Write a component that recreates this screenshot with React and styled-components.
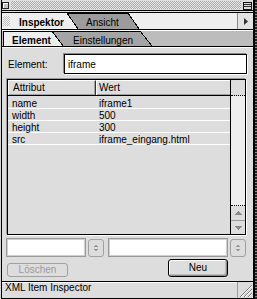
import React from "react";
import styled, { createGlobalStyle } from "styled-components";

const GlobalStyle = createGlobalStyle`
  html, body { margin: 0; padding: 0; }
  body {
    width: 257px;
    height: 299px;
    overflow: hidden;
    background: #d4d4d4;
    font-family: "Liberation Sans", Arial, sans-serif;
    font-size: 10px;
    color: #000;
  }
  * { box-sizing: border-box; }
`;

const Screen = styled.div`
  display: flex;
  width: 257px;
  height: 299px;
  padding-left: 1px;
  background: #d4d4d4;
`;

const Window = styled.div`
  width: 254px;
  height: 299px;
  display: flex;
  flex-direction: column;
  border-left: 1px solid #000;
  border-right: 2px solid #000;
  border-bottom: 1px solid #000;
  background: #dddddd;
`;

const BackStrip = styled.div`
  width: 2px;
  height: 299px;
  background: repeating-linear-gradient(to bottom, #222 0 2px, #8a8a8a 2px 3px);
`;

/* ---------- title bar ---------- */
const TitleBar = styled.div`
  display: flex;
  align-items: flex-start;
  gap: 2px;
  height: 11px;
  padding: 1px 0 0 0;
  border-bottom: 1px solid #000;
  background: #dddddd;
`;

const CloseBox = styled.div`
  width: 7px;
  height: 7px;
  margin-top: 1px;
  border: 1px solid #222;
  background: #c4c4c4;
  box-shadow: inset 1px 1px 0 #fff;
`;

const Checker = styled.div`
  background: conic-gradient(${p => p.$a} 25%, ${p => p.$b} 0 50%, ${p => p.$a} 0 75%, ${p => p.$b} 0) 0 0 / 2px 2px;
`;

const TitleStripes = styled(Checker)`
  flex: 1;
  height: 8px;
`;

const CollapseBox = styled.svg`
  display: block;
  margin-top: 1px;
  margin-right: 1px;
`;

/* ---------- tabs ---------- */
const TabRow = styled.div`
  display: flex;
  height: ${p => p.$h}px;
  margin-top: ${p => p.$mt || 0}px;
  border-top: 1px solid ${p => p.$topColor};
  border-bottom: 1px solid #000;
  background: ${p => p.$bg};
`;

const Tab = styled.div`
  display: flex;
  align-items: flex-start;
  flex: none;
  height: 100%;
  width: ${p => p.$w}px;
  padding-left: ${p => p.$pl}px;
  margin-left: ${p => p.$ml || 0}px;
  background: ${p => p.$bg};
  border-top: ${p => (p.$topLine ? "1px solid #000" : "none")};
  border-left: ${p => (p.$leftLine ? "1px solid #000" : "none")};
`;

const TabLabel = styled.span`
  font-weight: ${p => (p.$bold ? 700 : 400)};
  font-size: 10px;
  line-height: 11px;
  padding-top: ${p => p.$pt}px;
  white-space: nowrap;
`;

const Gripper = styled(Checker)`
  width: 7px;
  height: 10px;
  margin-top: 3px;
  margin-right: 9px;
`;

const Filler = styled.div`
  flex: 1;
`;

const ArrowButton = styled.div`
  flex: none;
  width: 16px;
  height: 100%;
  display: flex;
  align-items: center;
  justify-content: center;
  border-left: 1px solid #888;
  background: #e2e2e2;
`;

const SlantSvg = styled.svg`
  display: block;
  flex: none;
`;

const Slant = ({ w, h, left, right, topLine }) => (
  <SlantSvg width={w} height={h} viewBox={`0 0 ${w} ${h}`} shapeRendering="crispEdges">
    <polygon points={`0,0 ${w},${h} 0,${h}`} fill={left} />
    <polygon points={`0,0 ${w},0 ${w},${h}`} fill={right} />
    {topLine && <rect x="0" y="0" width={w} height="1" fill="#000" />}
    <line x1="0" y1="0" x2={w} y2={h} stroke="#000" strokeWidth="1" />
  </SlantSvg>
);

/* ---------- content ---------- */
const Content = styled.div`
  flex: 1;
  display: flex;
  flex-direction: column;
  border-top: 1px solid #fff;
  padding: 6px 6px 0 5px;
  background: #dddddd;
`;

const ElementRow = styled.div`
  display: flex;
  align-items: center;
  height: 20px;
`;

const Label = styled.label`
  width: 57px;
  padding-left: 1px;
  font-size: 10px;
`;

const TextField = styled.input`
  flex: ${p => (p.$w ? "none" : 1)};
  width: ${p => (p.$w ? `${p.$w}px` : "auto")};
  min-width: 0;
  height: ${p => p.$h}px;
  margin: 0;
  margin-left: ${p => p.$ml || 0}px;
  padding: 0 0 0 3px;
  font-family: "Liberation Sans", Arial, sans-serif;
  font-size: 10px;
  color: #000;
  background: #fff;
  outline: none;
  border: 1px solid ${p => (p.$disabled ? "#9a9a9a" : "#000")};
  box-shadow: ${p =>
    p.$disabled
      ? "inset 0 0 0 1px #cfcfcf"
      : "-1px -1px 0 #8a8a8a, 1px 1px 0 #fff"};
`;

const ListBox = styled.div`
  display: grid;
  grid-template-columns: 1fr 15px;
  height: 156px;
  margin-top: 5px;
  margin-right: 1px;
  border: 1px solid #000;
  background: #dddddd;
  box-shadow: -1px -1px 0 #9a9a9a, 1px 1px 0 #fff;
`;

const ListMain = styled.div`
  display: flex;
  flex-direction: column;
  min-width: 0;
`;

const HeaderRow = styled.div`
  display: grid;
  grid-template-columns: 88px 1fr;
  height: 16px;
  border-bottom: 1px solid #000;
`;

const HeaderCell = styled.div`
  background: #dddddd;
  border-top: 1px solid #fff;
  border-left: 1px solid #fff;
  border-right: ${p => (p.$divider ? "1px solid #333" : "none")};
  box-shadow: inset 0 -1px 0 #a0a0a0 ${p => (p.$divider ? ", inset -1px 0 0 #a0a0a0" : "")};
  padding-left: ${p => p.$pl}px;
  line-height: 13px;
  white-space: nowrap;
`;

const Rows = styled.div`
  flex: 1;
  padding-top: 1px;
`;

const Row = styled.div`
  display: grid;
  grid-template-columns: 91px 1fr;
  height: 12px;
  border-bottom: 1px solid #fff;
`;

const Cell = styled.div`
  padding-left: ${p => p.$pl || 0}px;
  height: 11px;
  line-height: 13px;
  white-space: nowrap;
`;

const ScrollBar = styled.div`
  display: flex;
  flex-direction: column;
  border-left: 1px solid #000;
`;

const ScrollCorner = styled.div`
  height: 16px;
  background: #dddddd;
  border-bottom: 1px dotted #000;
`;

const ScrollTrack = styled.div`
  flex: 1;
  background: #eeeeee;
  border-bottom: 1px dotted #000;
`;

const ScrollBtn = styled.div`
  height: ${p => p.$h}px;
  background: #dddddd;
  border-bottom: ${p => (p.$sep ? "1px solid #9a9a9a" : "none")};
  svg { display: block; }
`;

const FieldRow = styled.div`
  display: flex;
  align-items: flex-start;
  height: 19px;
  margin-top: 3px;
  margin-left: -1px;
`;

const Stepper = styled.div`
  width: 16px;
  height: 18px;
  margin-top: 1px;
  margin-left: 2px;
  border: 1px solid #a0a0a0;
  border-radius: 3px;
  background: #dddddd;
  svg { display: block; }
`;

const ButtonRow = styled.div`
  display: flex;
  align-items: flex-start;
  height: 19px;
  margin-top: 2px;
  padding-right: 19px;
`;

const Button = styled.div`
  display: flex;
  align-items: center;
  justify-content: center;
  width: ${p => p.$w}px;
  height: ${p => p.$h}px;
  margin-top: ${p => p.$mt || 0}px;
  margin-left: ${p => (p.$right ? "auto" : "0")};
  padding-bottom: ${p => p.$pb || 0}px;
  border: 1px solid ${p => (p.$disabled ? "#a0a0a0" : "#000")};
  border-radius: 3px;
  background: #dddddd;
  color: ${p => (p.$disabled ? "#9a9a9a" : "#000")};
  font-size: 10px;
  line-height: 10px;
  box-shadow: ${p =>
    p.$disabled ? "none" : "inset 1px 1px 0 #fff, inset -1px -1px 0 #8a8a8a, inset -2px -2px 0 #bbb"};
`;

/* ---------- status bar ---------- */
const StatusBar = styled.div`
  display: flex;
  height: 17px;
  border-top: 1px solid #000;
  background: #dddddd;
`;

const StatusText = styled.div`
  flex: 1;
  border-top: 1px solid #fff;
  padding-left: 3px;
  font-size: 10px;
  line-height: 9px;
  white-space: nowrap;
`;

const GrowBox = styled.div`
  width: 16px;
  border-left: 1px solid #9a9a9a;
  svg { display: block; }
`;

const rows = [
  ["name", "iframe1"],
  ["width", "500"],
  ["height", "300"],
  ["src", "iframe_eingang.html"],
];

const StepperArrows = () => (
  <svg width="14" height="16" viewBox="0 0 14 16" shapeRendering="crispEdges">
    <polygon points="4.5,7 7,4 9.5,7" fill="#9a9a9a" />
    <polygon points="4.5,9 9.5,9 7,12" fill="#9a9a9a" />
  </svg>
);

export default function App() {
  return (
    <>
      <GlobalStyle />
      <Screen>
        <Window>
          <TitleBar>
            <CloseBox />
            <TitleStripes $a="#a8a8a8" $b="#e8e8e8" />
            <CollapseBox width="9" height="8" viewBox="0 0 9 8" shapeRendering="crispEdges">
              <rect x="0.5" y="0.5" width="8" height="7" fill="#ddd" stroke="#111" />
              <rect x="1" y="2" width="7" height="1" fill="#333" />
              <rect x="1" y="4" width="7" height="1" fill="#333" />
            </CollapseBox>
          </TitleBar>

          <TabRow $h={18} $mt={1} $topColor="#000" $bg="#eeeeee">
            <Tab $w={65} $pl={1} $bg="#eeeeee">
              <Gripper $a="#bcbcbc" $b="#f6f6f6" />
              <TabLabel $bold $pt={4}>Inspektor</TabLabel>
            </Tab>
            <Slant w={11} h={16} left="#eeeeee" right="#9c9c9c" topLine />
            <Tab $w={50} $pl={8} $bg="#9c9c9c" $topLine>
              <TabLabel $pt={3}>Ansicht</TabLabel>
            </Tab>
            <Slant w={11} h={16} left="#9c9c9c" right="#eeeeee" />
            <Filler />
            <ArrowButton>
              <svg width="4" height="7" viewBox="0 0 4 7">
                <polygon points="0,0 4,3.5 0,7" fill="#333" />
              </svg>
            </ArrowButton>
          </TabRow>

          <TabRow $h={17} $topColor="#fff" $bg="#bcbcbc">
            <Tab $w={49} $pl={8} $ml={1} $bg="#eeeeee" $topLine $leftLine>
              <TabLabel $bold $pt={3}>Element</TabLabel>
            </Tab>
            <Slant w={11} h={15} left="#eeeeee" right="#a4a4a4" topLine />
            <Tab $w={77} $pl={10} $bg="#a4a4a4" $topLine>
              <TabLabel $pt={3}>Einstellungen</TabLabel>
            </Tab>
            <Slant w={12} h={15} left="#a4a4a4" right="#bcbcbc" />
            <Filler />
          </TabRow>

          <Content>
            <ElementRow>
              <Label>Element:</Label>
              <TextField $h={20} readOnly value="iframe" />
            </ElementRow>

            <ListBox>
              <ListMain>
                <HeaderRow>
                  <HeaderCell $divider $pl={4}>Attribut</HeaderCell>
                  <HeaderCell $pl={2}>Wert</HeaderCell>
                </HeaderRow>
                <Rows>
                  {rows.map(([k, v]) => (
                    <Row key={k}>
                      <Cell $pl={4}>{k}</Cell>
                      <Cell>{v}</Cell>
                    </Row>
                  ))}
                </Rows>
              </ListMain>
              <ScrollBar>
                <ScrollCorner />
                <ScrollTrack />
                <ScrollBtn $h={15} $sep>
                  <svg width="14" height="14" viewBox="0 0 14 14" shapeRendering="crispEdges">
                    <polygon points="3,9 7,5 11,9" fill="#8a8a8a" />
                  </svg>
                </ScrollBtn>
                <ScrollBtn $h={13}>
                  <svg width="14" height="13" viewBox="0 0 14 13" shapeRendering="crispEdges">
                    <polygon points="3,5 11,5 7,9" fill="#8a8a8a" />
                  </svg>
                </ScrollBtn>
              </ScrollBar>
            </ListBox>

            <FieldRow>
              <TextField $w={80} $h={19} $disabled readOnly value="" />
              <Stepper><StepperArrows /></Stepper>
              <TextField $w={120} $h={19} $ml={4} $disabled readOnly value="" />
              <Stepper><StepperArrows /></Stepper>
            </FieldRow>

            <ButtonRow>
              <Button $w={61} $h={14} $mt={4} $pb={1} $disabled>Löschen</Button>
              <Button $w={60} $h={18} $right>Neu</Button>
            </ButtonRow>
          </Content>

          <StatusBar>
            <StatusText>XML Item Inspector</StatusText>
            <GrowBox>
              <svg width="15" height="16" viewBox="0 0 15 16" shapeRendering="crispEdges">
                <line x1="2" y1="15" x2="14" y2="3" stroke="#7a7a7a" />
                <line x1="3" y1="15" x2="14" y2="4" stroke="#fff" />
                <line x1="6" y1="15" x2="14" y2="7" stroke="#7a7a7a" />
                <line x1="7" y1="15" x2="14" y2="8" stroke="#fff" />
                <line x1="10" y1="15" x2="14" y2="11" stroke="#7a7a7a" />
                <line x1="11" y1="15" x2="14" y2="12" stroke="#fff" />
              </svg>
            </GrowBox>
          </StatusBar>
        </Window>
        <BackStrip />
      </Screen>
    </>
  );
}
